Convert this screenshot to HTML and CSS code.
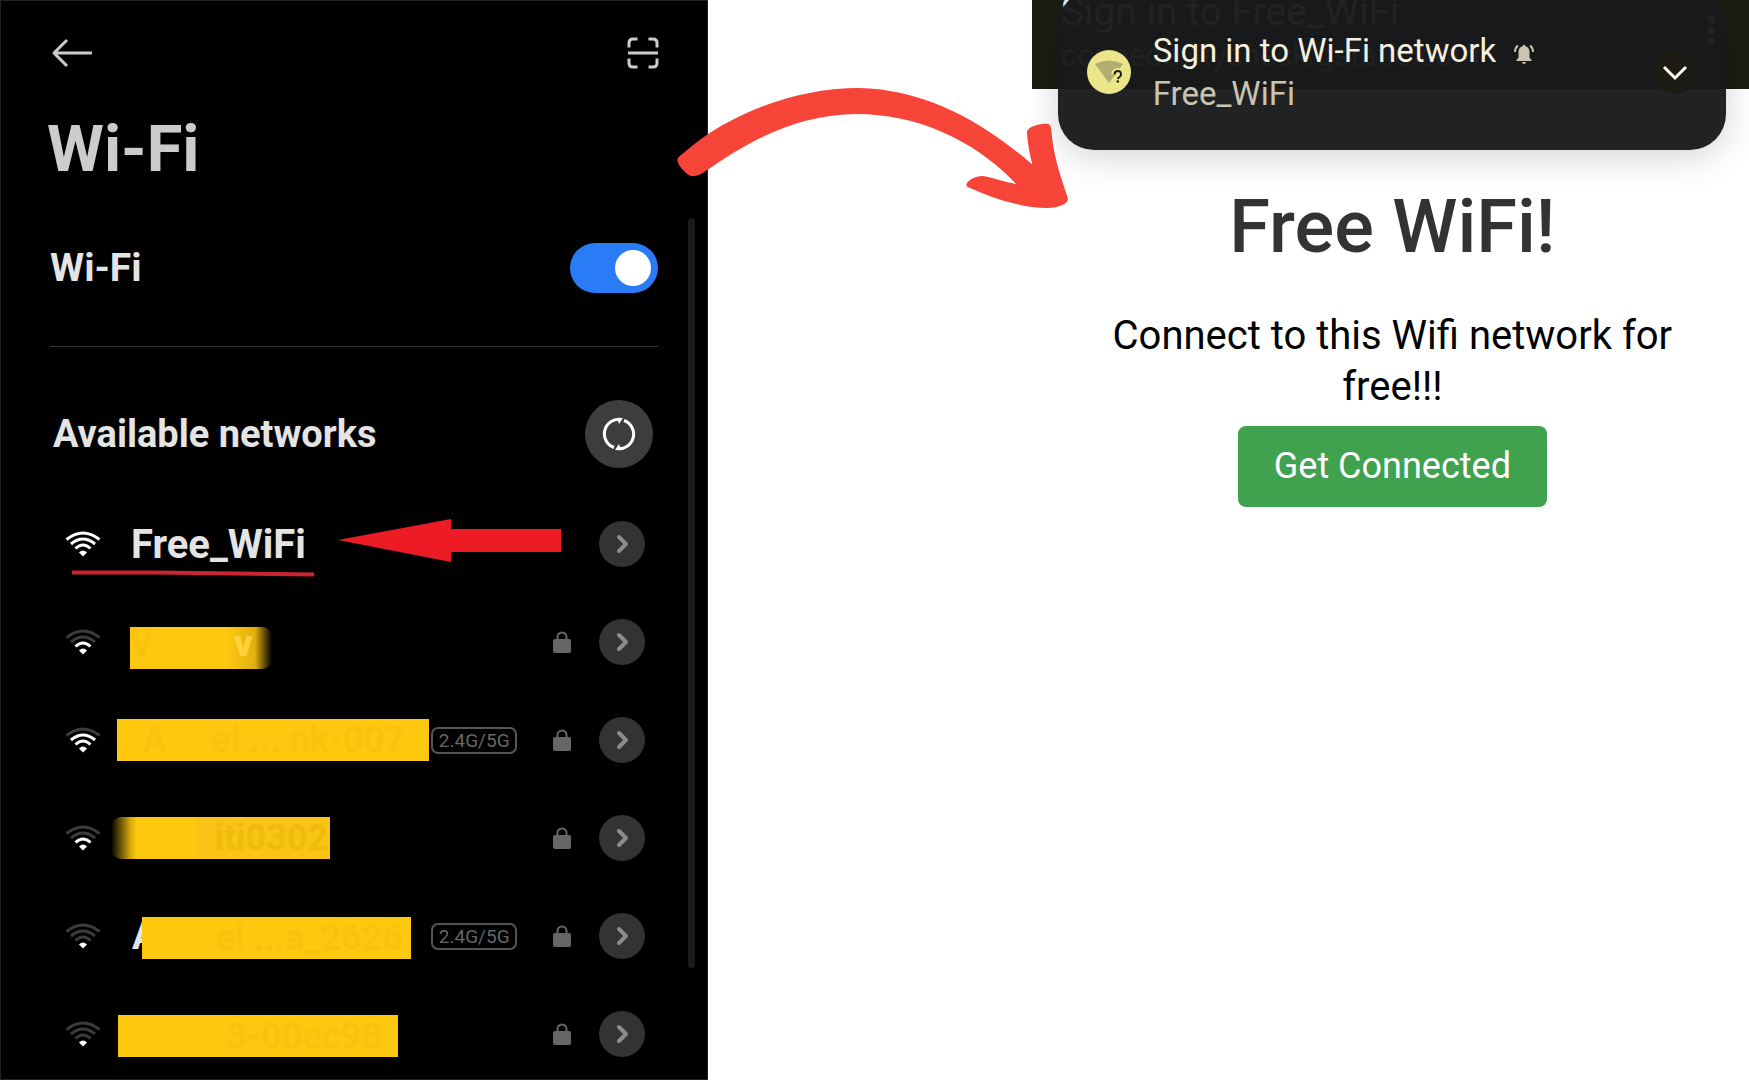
FILE: index.html
```html
<!DOCTYPE html>
<html lang="en">
<head>
<meta charset="utf-8">
<title>Wi-Fi</title>
<link rel="stylesheet" href="styles.css">
</head>
<body>
<svg class="defs" width="0" height="0" aria-hidden="true">
  <symbol id="wifi" viewBox="0 0 36 26">
    <path class="w4" d="M1.500 8.500Q18 -4.500 34.500 8.500"/>
    <path class="w3" d="M6 13Q18 3 30 13"/>
    <path class="w2" d="M10.500 17.500Q18 10.500 25.500 17.500"/>
    <path class="w1" d="M18 25.500L14 21.500Q18 17.500 22 21.500Z"/>
  </symbol>
  <symbol id="lock" viewBox="0 0 18 22">
    <path d="M4.500 9V6a4.500 4.500 0 0 1 9 0V9" fill="none" stroke="#666" stroke-width="2"/>
    <rect y="8" width="18" height="14" rx="2" fill="#666"/>
  </symbol>
  <symbol id="chevron" viewBox="0 0 46 46">
    <path d="M20 16L27 23L20 30" fill="none" stroke="#8c8c8c" stroke-width="4" stroke-linecap="round" stroke-linejoin="round"/>
  </symbol>
</svg>
<div class="stage">
  <section class="settings">
    <header class="topbar">
      <button class="icon-button" aria-label="Back">
        <svg width="42" height="30" viewBox="0 0 42 30"><path d="M41 15H4M16 2L3 15L16 28" fill="none" stroke="#ccc" stroke-width="3" stroke-linejoin="round"/></svg>
      </button>
      <button class="icon-button" aria-label="Scan QR code">
        <svg width="32" height="32" viewBox="0 0 32 32"><path d="M2 10.500V6Q2 2 6 2H10.500M21.500 2H26Q30 2 30 6V10.500M2 21.500V26Q2 30 6 30H10.500M21.500 30H26Q30 30 30 26V21.500M1 16H31" fill="none" stroke="#ccc" stroke-width="3"/></svg>
      </button>
    </header>
    <h1 class="title">Wi-Fi</h1>
    <div class="toggle-row">
      <label for="wifi-on">Wi-Fi</label>
      <input id="wifi-on" class="switch" type="checkbox" role="switch" checked>
    </div>
    <div class="list-head">
      <h2>Available networks</h2>
      <button class="refresh" aria-label="Refresh">
        <svg width="34" height="34" viewBox="0 0 34 34"><g fill="none" stroke="#fff" stroke-width="3"><path d="M12 30.500A14.500 14.500 0 0 1 19 2.500"/><path d="M22 3.500A14.500 14.500 0 0 1 15 31.500"/></g><path d="M15 1H21L17 7ZM19 33H13L17 27Z" fill="#fff"/></svg>
      </button>
    </div>
    <ul class="networks">
      <li class="network">
        <svg class="signal s4"><use href="#wifi"/></svg>
        <span class="name plain">Free_WiFi</span>
        <button class="go" aria-label="Details"><svg><use href="#chevron"/></svg></button>
        <svg class="callout" viewBox="0 0 496 64" aria-hidden="true"><path d="M272 25L385 4V14H495V37H385V47Z" fill="#ed1c24"/><path d="M6 57.500H90L248 59.500" fill="none" stroke="#cb2630" stroke-width="4"/></svg>
      </li>
      <li class="network">
        <svg class="signal s2"><use href="#wifi"/></svg>
        <span class="name"><span class="cover c1">V&nbsp; &nbsp; &nbsp; &nbsp; &nbsp;<b>v</b></span></span>
        <svg class="lock"><use href="#lock"/></svg>
        <button class="go" aria-label="Details"><svg><use href="#chevron"/></svg></button>
      </li>
      <li class="network">
        <svg class="signal s3"><use href="#wifi"/></svg>
        <span class="name"><span class="cover c2">A&nbsp; &nbsp; &nbsp;el ... nk-007</span></span>
        <span class="band">2.4G/5G</span>
        <svg class="lock"><use href="#lock"/></svg>
        <button class="go" aria-label="Details"><svg><use href="#chevron"/></svg></button>
      </li>
      <li class="network">
        <svg class="signal s2"><use href="#wifi"/></svg>
        <span class="name"><span class="cover c3">iti0302</span></span>
        <svg class="lock"><use href="#lock"/></svg>
        <button class="go" aria-label="Details"><svg><use href="#chevron"/></svg></button>
      </li>
      <li class="network">
        <svg class="signal s1"><use href="#wifi"/></svg>
        <span class="name"><span class="initial">A</span><span class="cover c4">el ...a_2626</span></span>
        <span class="band">2.4G/5G</span>
        <svg class="lock"><use href="#lock"/></svg>
        <button class="go" aria-label="Details"><svg><use href="#chevron"/></svg></button>
      </li>
      <li class="network">
        <svg class="signal s1"><use href="#wifi"/></svg>
        <span class="name"><span class="cover c5">3-00ec98</span></span>
        <svg class="lock"><use href="#lock"/></svg>
        <button class="go" aria-label="Details"><svg><use href="#chevron"/></svg></button>
      </li>
    </ul>
    <div class="scrollbar"></div>
  </section>

  <section class="portal">
    <header class="portal-bar">
      <div>
        <p class="bar-title">Sign in to Free_WiFi</p>
        <p class="bar-host">connectivitycheck.gstatic.com</p>
      </div>
      <svg class="dots" width="8" height="30" viewBox="0 0 8 30" fill="#ddd"><circle cx="4" cy="4" r="4"/><circle cx="4" cy="15" r="4"/><circle cx="4" cy="26" r="4"/></svg>
    </header>
    <main class="portal-body">
      <h1>Free WiFi!</h1>
      <p>Connect to this Wifi network for free!!!</p>
      <button class="connect">Get Connected</button>
    </main>
    <aside class="notification">
      <svg class="badge" width="44" height="44" viewBox="0 0 44 44"><circle cx="22" cy="22" r="22" fill="#ebe58b"/><path d="M8 14Q22 7 36 14L22 33Z" fill="#b2ad70"/><path d="M27 24.500Q27 20.500 31 20.500T35 24.500Q35 26.500 33 27.500T31 31" fill="none" stroke="#ebe58b" stroke-width="5"/><path d="M27.500 24.500Q27.500 21 30.800 21T34 24.500Q34 26 32.500 27T30.800 29" fill="none" stroke="#1d1d14" stroke-width="2"/><circle cx="30.800" cy="31.500" r="1.300" fill="#1d1d14"/></svg>
      <div class="message">
        <p class="headline">Sign in to Wi-Fi network
          <svg width="20" height="20" viewBox="0 0 20 20"><path d="M2.500 16L4.500 13.500V7.500Q5 3 8.500 2.200Q10 -0.500 11.500 2.200Q15 3 15.500 7.500V13.500L17.500 16V17H2.500ZM8 18H12Q11.500 20 10 20T8 18" fill="#c9c5b1"/><path d="M1 8Q1 4 3.800 1.500M19 8Q19 4 16.200 1.500" fill="none" stroke="#c9c5b1" stroke-width="2"/></svg>
        </p>
        <p class="detail">Free_WiFi</p>
      </div>
      <button class="expand" aria-label="Expand"><svg width="44" height="44" viewBox="0 0 44 44"><path d="M11 17L22 28L33 17" fill="none" stroke="#fffbee" stroke-width="3"/></svg></button>
    </aside>
  </section>

  <svg class="swoosh" viewBox="51 84 1172 361" aria-hidden="true"><path d="M52 300Q51 292 75 275C200 165 400 84 595 84C790 88 960 180 1114 313C1106 280 1099 245 1098 215C1102 197 1140 190 1160 191Q1170 193 1171 210C1176 280 1195 340 1220 412C1224 430 1195 442 1160 443C1080 443 1000 415 920 380C908 372 930 347 967 347C1000 353 1030 365 1066 371C930 230 760 163 590 162C420 165 290 225 130 337C112 350 92 350 84 343C70 333 54 314 52 300Z" fill="#f64438"/></svg>
</div>
</body>
</html>
```
FILE: styles.css
```css
* {
  box-sizing: border-box;
  margin: 0;
  padding: 0;
}

body {
  background: #fff;
  font-family: Roboto, "Liberation Sans", sans-serif;
}

button {
  border: 0;
  background: none;
  font: inherit;
}

svg {
  display: block;
  flex: none;
}

.defs {
  position: absolute;
}

.stage {
  position: relative;
  display: grid;
  grid-template-columns: minmax(0, 708fr) minmax(0, 717fr);
  column-gap: 18.5%;
  height: 100vh;
  overflow: hidden;
}

/* Phone settings */

.settings {
  position: relative;
  background: #000;
  border: 1px solid #222;
  color: #e4e4e4;
  overflow: hidden;
}

.topbar {
  display: flex;
  align-items: center;
  justify-content: space-between;
  height: 104px;
  padding: 0 48px 0 50px;
}

.title {
  padding-left: 46px;
  font-size: 65px;
  line-height: 88px;
  color: #ccc;
}

.toggle-row {
  display: flex;
  align-items: center;
  justify-content: space-between;
  height: 154px;
  margin: 0 49px 0 49px;
  padding-bottom: 4px;
  border-bottom: 1px solid #333;
  font-size: 39px;
  font-weight: 700;
}

.switch {
  appearance: none;
  display: flex;
  align-items: center;
  justify-content: flex-end;
  width: 88px;
  height: 50px;
  padding: 0 7px;
  border-radius: 25px;
  background: #2a7bf6;
}

.switch::before {
  content: "";
  width: 36px;
  height: 36px;
  border-radius: 50%;
  background: #fff;
}

.list-head {
  display: flex;
  align-items: center;
  justify-content: space-between;
  height: 148px;
  padding: 26px 54px 0 52px;
}

.list-head h2 {
  font-size: 38px;
}

.refresh,
.go {
  display: grid;
  flex: none;
  place-items: center;
  border-radius: 50%;
  width: 68px;
  height: 68px;
  background: #3d3d3d;
}

.networks {
  list-style: none;
}

.network {
  position: relative;
  display: flex;
  align-items: center;
  height: 98px;
  padding: 0 62px 0 64px;
}

.signal {
  width: 36px;
  height: 26px;
  fill: none;
  stroke-width: 3;
  --on: #fff;
  --off: #3c3c3c;
}

.w1 { fill: var(--on); }
.w2 { stroke: var(--l2, var(--off)); }
.w3 { stroke: var(--l3, var(--off)); }
.w4 { stroke: var(--l4, var(--off)); }
.s2 { --l2: #fff; }
.s3 { --l2: #fff; --l3: #fff; }
.s4 { --l2: #fff; --l3: #fff; --l4: #fff; }

.name {
  display: flex;
  flex: 1;
  align-items: center;
  min-width: 0;
  padding-left: 10px;
  font-size: 38px;
  font-weight: 700;
  white-space: pre;
}

.plain {
  padding-left: 30px;
  font-size: 40px;
}

.initial {
  width: 10px;
  margin-left: 21px;
  overflow: hidden;
}

.cover {
  flex: none;
  height: 42px;
  background: #fec80e;
  color: #f8c20d;
  font-size: 36px;
  line-height: 42px;
  text-align: right;
  padding-right: 8px;
}

.c1 {
  width: 142px;
  margin: 12px 0 0 19px;
  padding-right: 32px;
  border-radius: 0 10px 10px 0;
  background: linear-gradient(90deg, #fec80e 68%, #e2b00e 88%, #000);
  line-height: 34px;
}

.c1 b {
  color: #fed13c;
}

.c2 {
  width: 312px;
  margin-left: 6px;
  padding-right: 24px;
}

.c3 {
  width: 219px;
  background: linear-gradient(90deg, #000, #d9ab0c 9%, #fec80e 12%, #fec80e 38%, #f9c416 40%);
  border-radius: 10px 0 0 10px;
  padding-right: 2px;
  color: #f0bc0c;
}

.c4 {
  width: 269px;
  margin-top: 4px;
}

.c5 {
  width: 280px;
  margin: 4px 0 0 7px;
  padding-right: 16px;
}

.band {
  flex: none;
  width: 86px;
  margin-right: 36px;
  border: 2px solid #555;
  border-radius: 7px;
  color: #666;
  font-size: 19px;
  line-height: 23px;
  text-align: center;
}

.lock {
  width: 18px;
  height: 22px;
  margin-right: 28px;
}

.go {
  width: 46px;
  height: 46px;
  background: #333;
}

.go svg {
  width: 46px;
  height: 46px;
}

.callout {
  position: absolute;
  left: 65px;
  top: 20px;
  width: 496px;
  height: 64px;
}

.scrollbar {
  position: absolute;
  right: 12px;
  top: 217px;
  width: 7px;
  height: 750px;
  border-radius: 4px;
  background: #1b1b1b;
}

/* Captive portal */

.portal {
  position: relative;
  overflow: hidden;
}

.portal-bar {
  display: flex;
  justify-content: space-between;
  height: 89px;
  padding: 0 34px 0 29px;
  background: #1c1c14;
  overflow: hidden;
}

.bar-title {
  color: #f0f0f0;
  font-size: 39px;
  line-height: 24px;
}

.bar-host {
  margin-top: 16px;
  color: #c4c4c4;
  font-size: 31px;
  line-height: 32px;
}

.dots {
  margin-top: 15px;
}

.portal-body {
  display: flex;
  flex-direction: column;
  align-items: center;
  padding: 95px 62px 0 66px;
  text-align: center;
}

.portal-body h1 {
  color: #333;
  font-size: 74px;
  font-weight: 500;
  line-height: 85px;
}

.portal-body p {
  margin: 41px 0 14px;
  color: #000;
  font-size: 40px;
  line-height: 51px;
}

.connect {
  padding: 0 36px;
  border-radius: 8px;
  background: #40a14f;
  color: #fff;
  font-size: 36px;
  line-height: 81px;
}

.notification {
  position: absolute;
  top: -10px;
  left: 26px;
  right: 23px;
  display: flex;
  align-items: center;
  padding: 39px 29px 35px;
  border-radius: 36px;
  background: rgb(24 25 27 / 96%);
  box-shadow: 0 6px 36px rgb(0 0 0 / 18%);
}

.message {
  flex: 1;
  margin-left: 22px;
  font-size: 33px;
  line-height: 43px;
}

.headline {
  display: flex;
  align-items: center;
  gap: 18px;
  color: #f5f0df;
}

.headline svg {
  margin-top: 6px;
}

.detail {
  color: #c9c5b1;
}

.expand {
  border-radius: 50%;
  background: #1c1b15;
}

.swoosh {
  position: absolute;
  left: 38.7%;
  top: 88px;
  width: 22.4%;
}
```
